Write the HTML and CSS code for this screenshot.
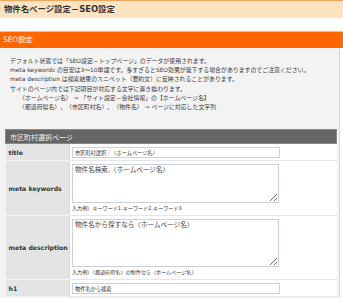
FILE: index.html
```html
<!DOCTYPE html>
<html lang="ja">
<head>
  <meta charset="UTF-8">
  <meta name="viewport" content="width=device-width, initial-scale=1.0">
  <title>物件名ページ設定－SEO設定</title>
  <link rel="stylesheet" href="styles.css">
</head>
<body>

  <h1 class="page-title">物件名ページ設定－SEO設定</h1>

  <div class="section">
    <h2 class="section-head">SEO設定</h2>

    <div class="section-body">
      <div class="notes">
        <p>デフォルト状態では「SEO設定－トップページ」のデータが使用されます。</p>
        <p>meta keywords の目安は3～10単語です。多すぎるとSEO効果が低下する場合がありますのでご注意ください。</p>
        <p>meta description は検索結果のスニペット（要約文）に反映されることがあります。</p>
        <p>サイトのページ内では下記項目が対応する文字に置き換わります。</p>
        <p class="indent">〈ホームページ名〉 ⇒ 「サイト設定－会社情報」の【ホームページ名】</p>
        <p class="indent">〈都道府県名〉、〈市区町村名〉、〈物件名〉 ⇒ ページに対応した文字列</p>
      </div>

      <table class="seo-table">
        <tr>
          <th colspan="2">市区町村選択ページ</th>
        </tr>
        <tr class="row-line">
          <td class="label">title</td>
          <td class="value"><input type="text" value="市区町村選択｜〈ホームページ名〉"></td>
        </tr>
        <tr class="row-area">
          <td class="label">meta keywords</td>
          <td class="value">
            <textarea class="kw">物件名検索,〈ホームページ名〉</textarea>
            <div class="hint">入力例）キーワード1,キーワード2,キーワード3</div>
          </td>
        </tr>
        <tr class="row-area">
          <td class="label">meta description</td>
          <td class="value">
            <textarea class="desc">物件名から探すなら〈ホームページ名〉</textarea>
            <div class="hint">入力例）〈都道府県名〉の物件なら〈ホームページ名〉</div>
          </td>
        </tr>
        <tr class="row-line">
          <td class="label">h1</td>
          <td class="value"><input type="text" value="物件名から検索"></td>
        </tr>
      </table>
    </div>
  </div>

</body>
</html>
```

FILE: styles.css
```css
* {
  margin: 0;
  padding: 0;
  box-sizing: border-box;
}

body {
  font-family: "DejaVu Sans", "Noto Sans CJK JP", sans-serif;
  background-color: #ffffff;
  color: #333333;
}

.page-title {
  height: 18px;
  border-top: 1px solid #f0a460;
  background-color: #fde3bf;
  padding-left: 4px;
  font-size: 8.4px;
  font-weight: bold;
  line-height: 16px;
  color: #333333;
}

.section {
  margin-top: 13px;
}

.section-head {
  height: 17px;
  border-top: 1px solid #ffb88a;
  background-color: #ff6600;
  padding-left: 3px;
  font-size: 7.4px;
  font-weight: normal;
  line-height: 16px;
  color: #ffffff;
}

.section-body {
  width: 340px;
  background-color: #f3f3f3;
  border-right: 1px solid #d9d9d9;
  padding: 9px 3px 3px 5px;
}

.notes {
  padding-left: 5px;
  font-size: 5.9px;
  line-height: 9.2px;
  color: #3a3a3a;
}

.notes .indent {
  padding-left: 9px;
}

.seo-table {
  margin-top: 17px;
  width: 332px;
  border-collapse: collapse;
}

.seo-table th {
  height: 14px;
  background-color: #666666;
  border: 1px solid #8a8a8a;
  padding-left: 4px;
  font-size: 7px;
  font-weight: normal;
  text-align: left;
  color: #f0f0f0;
}

.seo-table td {
  border-bottom: 1px solid #e6e6e6;
}

.label {
  width: 64px;
  background-color: #e4e4e4;
  border-right: 1px solid #d8d8d8;
  border-bottom-color: #f4f4f4 !important;
  padding-left: 3px;
  font-size: 6.2px;
  font-weight: bold;
  vertical-align: middle;
}

.value {
  background-color: #ffffff;
  padding: 3px 2px 2px;
}

.row-line td {
  height: 17px;
}

.value input {
  display: block;
  width: 208px;
  height: 11px;
  border: 1px solid #c9d1da;
  padding: 0 2px;
  font-family: "DejaVu Sans", "Noto Sans CJK JP", sans-serif;
  font-size: 5.2px;
  color: #333333;
}

.value textarea {
  display: block;
  width: 207px;
  border: 1px solid #c9d1da;
  padding: 1px 2px;
  font-family: "DejaVu Sans", "Noto Sans CJK JP", sans-serif;
  font-size: 6.6px;
  line-height: 8px;
  color: #444444;
}

.value textarea.kw {
  height: 39px;
}

.value textarea.desc {
  height: 48px;
}

.row-area .value {
  padding-bottom: 2px;
}

.hint {
  height: 10px;
  font-size: 5.1px;
  line-height: 10px;
  color: #333333;
}
```
